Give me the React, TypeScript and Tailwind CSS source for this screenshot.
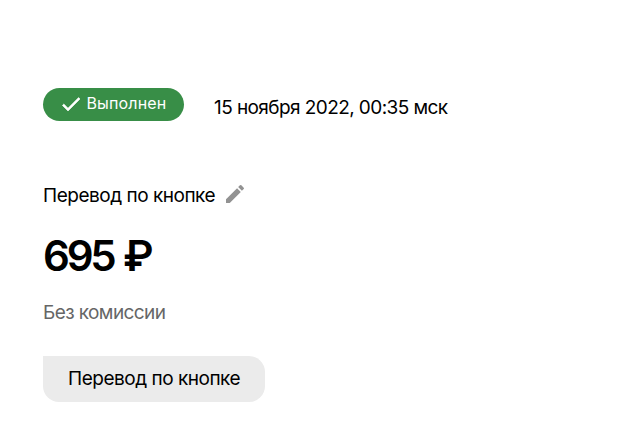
import type { ReactNode } from "react";

function CheckIcon() {
  return (
    <svg viewBox="0 0 24 24" className="-mt-px h-6 w-6 shrink-0 fill-white stroke-white" strokeWidth="0.6">
      <path d="M9 16.17 4.83 12l-1.42 1.41L9 19 21 7l-1.41-1.41z" />
    </svg>
  );
}

function EditIcon() {
  return (
    <svg viewBox="0 0 24 24" className="h-6 w-6 shrink-0 fill-[#929292]">
      <path d="M3 17.25V21h3.75L17.81 9.94l-3.75-3.75L3 17.25zM20.71 7.04a.996.996 0 0 0 0-1.41l-2.34-2.34a.996.996 0 0 0-1.41 0l-1.83 1.83 3.75 3.75 1.83-1.83z" />
    </svg>
  );
}

function StatusBadge({ children }: { children: ReactNode }) {
  return (
    <div className="flex h-[33px] w-[141px] items-center rounded-full bg-[#388e47] pl-[15.5px] text-white">
      <CheckIcon />
      <span className="-mt-0.5 ml-1 text-[16px] leading-[31px] tracking-[0.15px]">{children}</span>
    </div>
  );
}

export default function App() {
  return (
    <main className="flex h-screen flex-col items-start overflow-hidden bg-white pl-[43px] pt-[88px] font-['Inter',sans-serif] text-[19px] leading-6 whitespace-nowrap text-black">
      <div className="flex items-start">
        <StatusBadge>Выполнен</StatusBadge>
        <time className="mt-2 ml-[30px] tracking-[-0.58px]">15 ноября 2022, 00:35 мск</time>
      </div>

      <div className="mt-[61px] flex h-6 items-start">
        <h1 className="mt-0.5 w-[180px] tracking-[-0.48px]">Перевод по кнопке</h1>
        <EditIcon />
      </div>

      <p className="mt-[26px] text-[42px] leading-12 font-semibold tracking-[-3.2px] [word-spacing:2px]">695 ₽</p>
      <p className="mt-[21px] tracking-[-0.58px] text-[#666]">Без комиссии</p>

      <div className="mt-[31px] flex h-[46px] w-[222px] items-center rounded-2xl rounded-tl-none bg-[#ebebeb] pl-[25px] tracking-[-0.48px]">
        Перевод по кнопке
      </div>
    </main>
  );
}
